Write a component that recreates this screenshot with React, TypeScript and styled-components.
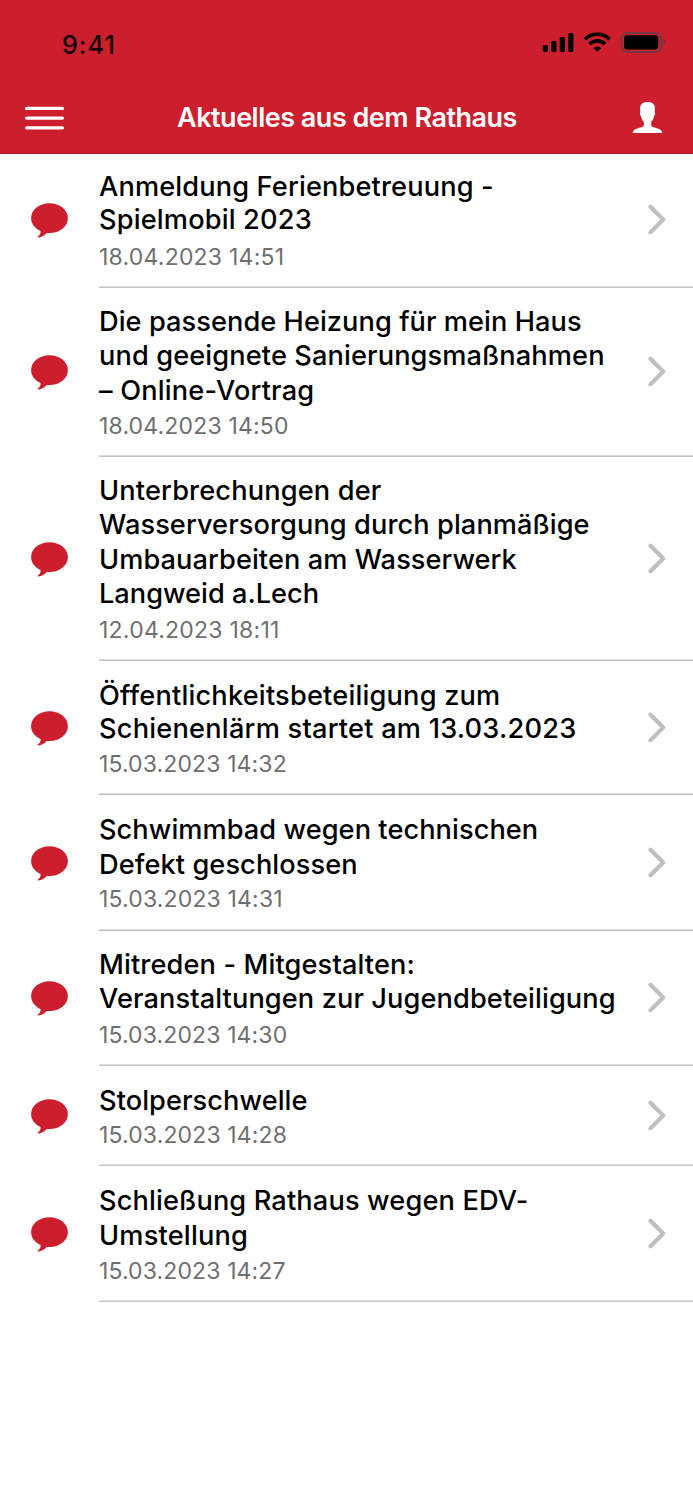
import React from 'react';
import styled, { createGlobalStyle } from 'styled-components';

const Global = createGlobalStyle`
  * { box-sizing: border-box; }
  body { margin: 0; background: #fff; font-family: Inter, "Liberation Sans", sans-serif; }
`;

const Screen = styled.div`
  width: 693px;
  height: 1500px;
  overflow: hidden;
  background: #fff;
`;

const Header = styled.header`
  height: 154px;
  background: #cc1e2c;
  border-bottom: 1px solid #a51824;
`;

const StatusBar = styled.div`
  height: 84px;
  display: flex;
  justify-content: space-between;
  align-items: flex-start;
  padding: 31px 27px 0 62px;
`;

const Time = styled.span`
  font-size: 25.2px;
  line-height: 29px;
  font-weight: 500;
  letter-spacing: 1px;
  color: #0d0203;
`;

const StatusIcons = styled.svg`
  display: block;
  width: 124px;
  height: 22px;
`;

const NavBar = styled.div`
  height: 68px;
  display: grid;
  grid-template-columns: 40px 1fr 31px;
  align-items: center;
  padding: 0 30px 0 25px;
`;

const MenuIcon = styled.svg`
  display: block;
  width: 39px;
  height: 24px;
`;

const PersonIcon = styled.svg`
  display: block;
  width: 31px;
  height: 32px;
`;

const Title = styled.h1`
  margin: 0;
  padding-right: 3px;
  text-align: center;
  white-space: nowrap;
  font-size: 27px;
  line-height: 34px;
  font-weight: 600;
  letter-spacing: -0.5px;
  color: #fff;
`;

const List = styled.main`
  display: flex;
  flex-direction: column;
  margin-top: -2px;
`;

const Row = styled.article<{ $height: number }>`
  height: ${(p) => p.$height}px;
  display: grid;
  grid-template-columns: 99px 1fr;
`;

const IconCell = styled.div`
  display: flex;
  align-items: center;
  padding-left: 31px;
`;

const BubbleIcon = styled.svg`
  display: block;
  width: 37px;
  height: 35px;
`;

const Body = styled.div`
  display: flex;
  justify-content: space-between;
  align-items: center;
  padding-right: 27px;
  border-bottom: 1px solid #c4c4c8;
  box-shadow: inset 0 -1px #dedee1;
`;

const TextBlock = styled.div<{ $top: number }>`
  align-self: flex-start;
  padding-top: ${(p) => p.$top}px;
`;

const Line = styled.div<{ $spacing: number; $leading: number }>`
  white-space: nowrap;
  font-size: 27.2px;
  font-weight: 500;
  line-height: ${(p) => p.$leading}px;
  letter-spacing: ${(p) => p.$spacing}px;
  color: #000;
`;

const DateText = styled.div<{ $spacing: number; $gap: number }>`
  margin-top: ${(p) => p.$gap}px;
  font-size: 23px;
  line-height: 38px;
  letter-spacing: ${(p) => p.$spacing}px;
  color: #6f6f6f;
`;

const Chevron = styled.svg`
  display: block;
  flex: none;
  width: 18px;
  height: 31px;
  margin-bottom: 1px;
`;

interface News {
  height: number;
  top: number;
  leading: number;
  gap: number;
  lines: [string, number][];
  date: string;
  dateSpacing: number;
}

const news: News[] = [
  { height: 136, top: 18, leading: 33, gap: 2, lines: [['Anmeldung Ferienbetreuung -', 0.14], ['Spielmobil 2023', 0.16]], date: '18.04.2023 14:51', dateSpacing: 0.22 },
  { height: 169, top: 17, leading: 34.3, gap: -0.9, lines: [['Die passende Heizung für mein Haus', 0.06], ['und geeignete Sanierungsmaßnahmen', 0.11], ['– Online-Vortrag', 0.18]], date: '18.04.2023 14:50', dateSpacing: 0.17 },
  { height: 204, top: 17, leading: 34.3, gap: -0.2, lines: [['Unterbrechungen der', 0.15], ['Wasserversorgung durch planmäßige', 0.08], ['Umbauarbeiten am Wasserwerk', 0.07], ['Langweid a.Lech', 0]], date: '12.04.2023 18:11', dateSpacing: 0.24 },
  { height: 134, top: 18, leading: 33, gap: 0, lines: [['Öffentlichkeitsbeteiligung zum', 0.19], ['Schienenlärm startet am 13.03.2023', 0.22]], date: '15.03.2023 14:32', dateSpacing: 0.12 },
  { height: 136, top: 16.5, leading: 35, gap: -1.5, lines: [['Schwimmbad wegen technischen', 0.06], ['Defekt geschlossen', 0.08]], date: '15.03.2023 14:31', dateSpacing: 0.16 },
  { height: 135, top: 17, leading: 34, gap: 0, lines: [['Mitreden - Mitgestalten:', 0.13], ['Veranstaltungen zur Jugendbeteiligung', 0.1]], date: '15.03.2023 14:30', dateSpacing: 0.12 },
  { height: 100, top: 18, leading: 34, gap: -2, lines: [['Stolperschwelle', 0.07]], date: '15.03.2023 14:28', dateSpacing: 0.14 },
  { height: 136, top: 17, leading: 35, gap: -1, lines: [['Schließung Rathaus wegen EDV-', 0.14], ['Umstellung', 0.2]], date: '15.03.2023 14:27', dateSpacing: 0.12 },
];

export default function App() {
  return (
    <Screen>
      <Global />
      <Header>
        <StatusBar>
          <Time>9:41</Time>
          <StatusIcons viewBox="0 0 124 22">
            <rect x="0.8" y="14" width="5.2" height="7" rx="1.4" />
            <rect x="9.2" y="10" width="5.2" height="11" rx="1.4" />
            <rect x="17.8" y="6" width="5.2" height="15" rx="1.4" />
            <rect x="26.2" y="2" width="5.2" height="19" rx="1.4" />
            <g fill="none" stroke="#000" strokeWidth="3.6">
              <path d="M42.9 8.2a17.8 17.8 0 0 1 24.7 0" />
              <path d="M47.5 13a11.2 11.2 0 0 1 15.5 0" />
            </g>
            <path d="M55.25 21l-3.9-4a5.8 5.8 0 0 1 7.8 0z" />
            <rect x="79.7" y="1.9" width="39.4" height="18.9" rx="5.4" fill="none" stroke="#653f45" strokeWidth="1.7" />
            <rect x="82.1" y="4.2" width="34.1" height="14.2" rx="3" />
            <path d="M121.2 8.2q2.1.9 2.1 3.2t-2.1 3.2z" fill="#653f45" />
          </StatusIcons>
        </StatusBar>
        <NavBar>
          <MenuIcon viewBox="0 0 39 24" fill="#fff">
            <rect y="0.8" width="39" height="3.2" rx="1.6" />
            <rect y="10.5" width="39" height="3.2" rx="1.6" />
            <rect y="20.2" width="39" height="3.2" rx="1.6" />
          </MenuIcon>
          <Title>Aktuelles aus dem Rathaus</Title>
          <PersonIcon viewBox="0 0 31 32" fill="#fff">
            <path d="M15.5 0C10.4 0 8 2.5 8.1 6.5L8.2 10C7.6 11 8 13.400 9 14.200C9.500 16.800 10.300 18.400 11.800 19.700V23.300C11.300 25.300 8.400 25.500 5.400 26.500C2.200 27.600.9 28.500.7 31H30.300C30.100 28.500 28.800 27.600 25.600 26.500C22.600 25.500 19.700 25.300 19.200 23.300V19.700C20.700 18.400 21.500 16.800 22 14.200C23 13.400 23.400 11 22.800 10L22.900 6.500C23 2.500 20.600 0 15.500 0Z" />
          </PersonIcon>
        </NavBar>
      </Header>
      <List>
        {news.map((item) => (
          <Row key={item.date} $height={item.height}>
            <IconCell>
              <BubbleIcon viewBox="0 0 37 35" fill="#cc1e2c">
                <path d="M18.5.3C8.3.3.1 6.9.1 15.2c0 5.6 3.8 10.3 9.4 12.7.5 1.800-.6 4.200-2.700 5.700-.5.4-.3.900.3.800 3.700-.4 6.700-1.900 8.500-4.400 1 .1 1.900.1 2.900.1 10.200 0 18.400-6.600 18.400-14.900S28.700.3 18.500.3z" />
              </BubbleIcon>
            </IconCell>
            <Body>
              <TextBlock $top={item.top}>
                {item.lines.map(([text, spacing]) => (
                  <Line key={text} $spacing={spacing} $leading={item.leading}>{text}</Line>
                ))}
                <DateText $spacing={item.dateSpacing} $gap={item.gap}>{item.date}</DateText>
              </TextBlock>
              <Chevron viewBox="0 0 18 31" fill="none" stroke="#c0c0c0" strokeWidth="4.2" strokeLinecap="round" strokeLinejoin="round">
                <path d="M2.5 2.8L15.2 15.5L2.5 28.2" />
              </Chevron>
            </Body>
          </Row>
        ))}
      </List>
    </Screen>
  );
}
